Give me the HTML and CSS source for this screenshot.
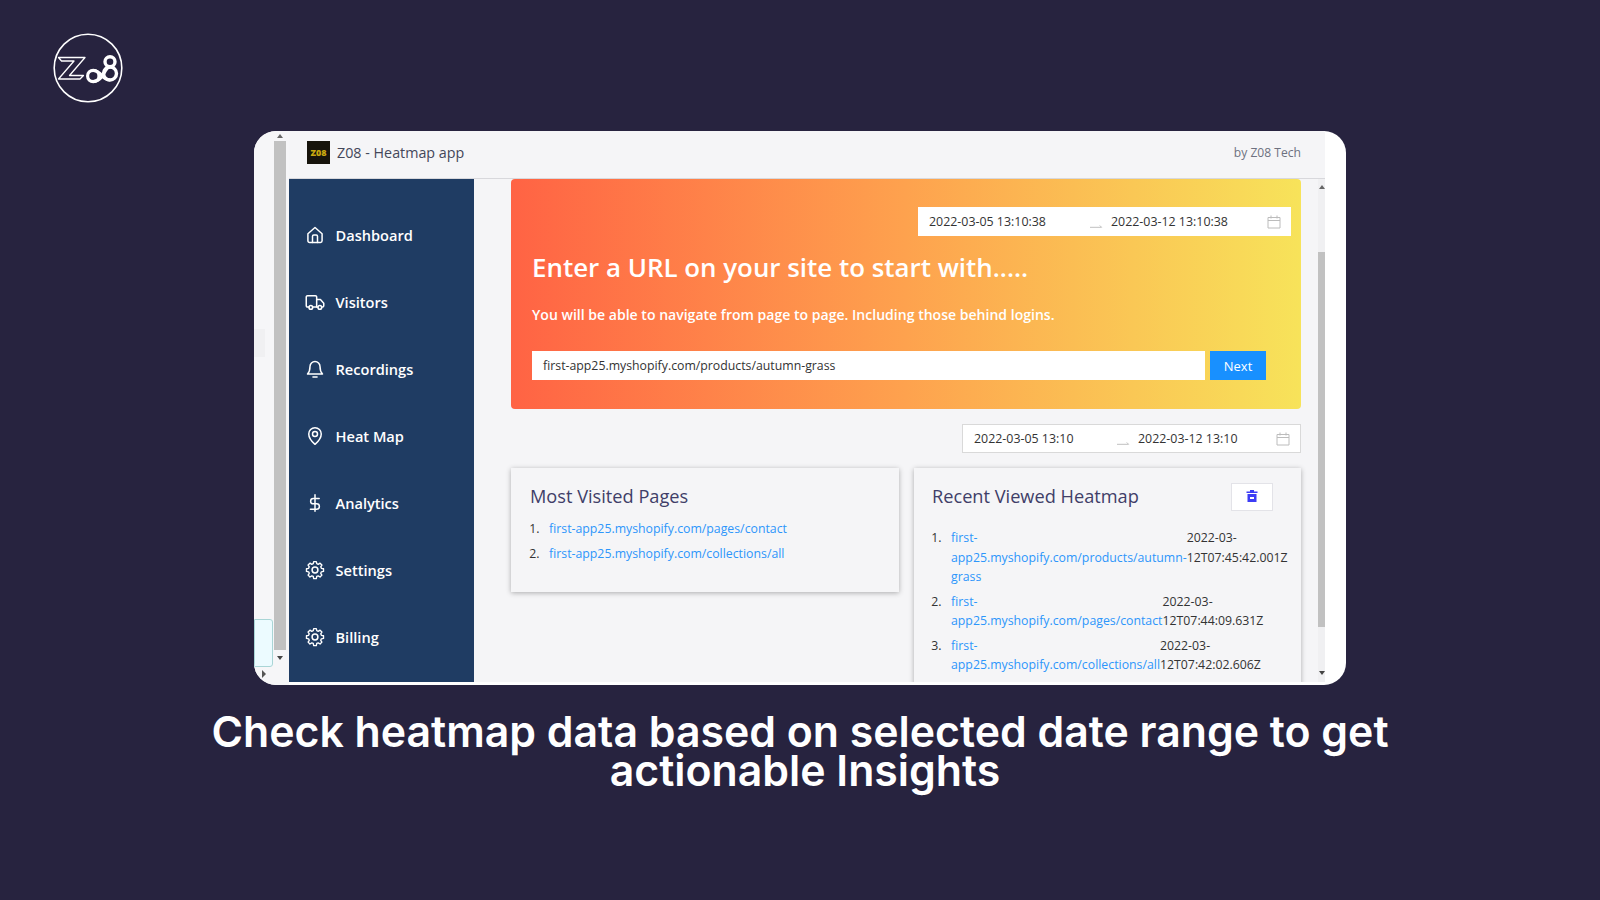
FILE: index.html
```html
<!DOCTYPE html>
<html lang="en">
<head>
    <meta charset="UTF-8">
    <meta name="viewport" content="width=device-width, initial-scale=1.0">
    <title>Z08 - Heatmap app</title>
    <link rel="stylesheet" href="styles.css">
</head>
<body>
    <header class="brand">
        <svg class="brand-logo" viewBox="0 0 70 70" width="70" height="70" fill="none" stroke="#fff">
            <circle cx="35" cy="35" r="33.8" stroke-width="1.6"/>
            <path d="M5.5 24.5H32L16.5 42.5H30.5L27 46H5.5L21 28H8.5Z" stroke-width="1.3" stroke-linejoin="round"/>
            <circle cx="40.3" cy="43" r="5.7" stroke-width="3.2"/>
            <circle cx="57" cy="40.5" r="6.5" stroke-width="3.4"/>
            <circle cx="57" cy="28.7" r="5" stroke-width="3.4"/>
            <path d="M40 37.500C45 37.500 47 40 49 42.500C51 45 53 47 57 47M40 48.500C45 48.500 47 46 49 43.500C51 41 53 34 57 34" stroke-width="3.2"/>
        </svg>
    </header>

    <section class="window">
        <div class="rail">
            <div class="rail-strip">
                <span class="rail-tab"></span>
                <span class="rail-box"></span>
                <span class="rail-corner"></span>
            </div>
            <div class="rail-scroll">
                <span class="arrow-up"></span>
                <span class="rail-thumb"></span>
                <span class="arrow-down"></span>
            </div>
        </div>

        <div class="app">
            <div class="topbar">
                <div class="topbar-title">
                    <span class="app-logo">Z08</span>
                    <span>Z08 - Heatmap app</span>
                </div>
                <span class="topbar-by">by Z08 Tech</span>
            </div>

            <div class="app-body">
                <nav class="sidebar">
                    <a class="nav-item">
                        <svg class="nav-icon" viewBox="0 0 24 24"><path d="M3.5 10.5 12 3l8.500 7.500V19a2 2 0 0 1-2 2h-13a2 2 0 0 1-2-2Z"/><path d="M9 21v-7.500a1.500 1.500 0 0 1 1.500-1.500h3a1.500 1.500 0 0 1 1.500 1.500V21"/></svg>
                        Dashboard
                    </a>
                    <a class="nav-item">
                        <svg class="nav-icon" viewBox="0 0 24 24"><path d="M5 18H3a1.500 1.500 0 0 1-1.500-1.500V6A1.500 1.500 0 0 1 3 4.500h9.500A1.500 1.500 0 0 1 14 6v12H9"/><path d="M14 9h4.500l4 4.500V16.500A1.500 1.500 0 0 1 21 18h-1M14 18h1.500"/><circle cx="7" cy="18.500" r="2.200"/><circle cx="17.800" cy="18.500" r="2.200"/></svg>
                        Visitors
                    </a>
                    <a class="nav-item">
                        <svg class="nav-icon" viewBox="0 0 24 24"><path d="M12 3a6 6 0 0 0-6 6c0 5-1 7-3 9h18c-2-2-3-4-3-9a6 6 0 0 0-6-6Z"/><path d="M9.500 21.500h5"/></svg>
                        Recordings
                    </a>
                    <a class="nav-item">
                        <svg class="nav-icon" viewBox="0 0 24 24"><path d="M12 22s-7.500-6.500-7.500-12.500a7.500 7.500 0 0 1 15 0C19.500 15.500 12 22 12 22Z"/><circle cx="12" cy="9.500" r="3"/></svg>
                        Heat Map
                    </a>
                    <a class="nav-item">
                        <svg class="nav-icon" viewBox="0 0 24 24"><path d="M12 2v20M17 6.500H10a3 3 0 0 0 0 6.500h4a3 3 0 0 1 0 6.500H6.500"/></svg>
                        Analytics
                    </a>
                    <a class="nav-item">
                        <svg class="nav-icon" viewBox="0 0 24 24"><use href="#gear"/></svg>
                        Settings
                    </a>
                    <a class="nav-item">
                        <svg class="nav-icon" viewBox="0 0 24 24"><use href="#gear"/></svg>
                        Billing
                    </a>
                </nav>

                <main class="main">
                    <div class="hero">
                        <div class="range range-hero">
                            <span class="range-text">2022-03-05 13:10:38</span>
                            <svg class="range-arrow" viewBox="0 0 14 6"><path d="M0 5.500h12.500L10.500 3.500"/></svg>
                            <span class="range-text">2022-03-12 13:10:38</span>
                            <svg class="range-cal" viewBox="0 0 14 14"><path d="M1 2.500h12v10.500H1ZM1 5.500h12M4 .5v3M10 .5v3"/></svg>
                        </div>
                        <h1 class="hero-title">Enter a URL on your site to start with.....</h1>
                        <p class="hero-sub">You will be able to navigate from page to page. Including those behind logins.</p>
                        <div class="hero-form">
                            <div class="url-input">first-app25.myshopify.com/products/autumn-grass</div>
                            <button class="btn-next">Next</button>
                        </div>
                    </div>

                    <div class="range range-main">
                        <span class="range-text">2022-03-05 13:10</span>
                        <svg class="range-arrow" viewBox="0 0 14 6"><path d="M0 5.500h12.500L10.500 3.500"/></svg>
                        <span class="range-text">2022-03-12 13:10</span>
                        <svg class="range-cal" viewBox="0 0 14 14"><path d="M1 2.500h12v10.500H1ZM1 5.500h12M4 .5v3M10 .5v3"/></svg>
                    </div>

                    <div class="cards">
                        <div class="card card-short">
                            <h2 class="card-title">Most Visited Pages</h2>
                            <ol class="page-list">
                                <li><a>first-app25.myshopify.com/pages/contact</a></li>
                                <li><a>first-app25.myshopify.com/collections/all</a></li>
                            </ol>
                        </div>
                        <div class="card card-tall">
                            <div class="card-head">
                                <h2 class="card-title">Recent Viewed Heatmap</h2>
                                <button class="btn-trash">
                                    <svg viewBox="0 0 14 14" width="14" height="14"><path d="M5 1h4v1.500h3.500V4h-11V2.500H5ZM2.500 5h9v8h-9Z" fill="#3d3df5"/><path d="M5 8h4v2H5Z" fill="#fff"/></svg>
                                </button>
                            </div>
                            <ol class="recent-list">
                                <li><span class="recent-row"><a>first-<br>app25.myshopify.com/products/autumn-<br>grass</a><span>2022-03-<br>12T07:45:42.001Z</span></span></li>
                                <li><span class="recent-row"><a>first-<br>app25.myshopify.com/pages/contact</a><span>2022-03-<br>12T07:44:09.631Z</span></span></li>
                                <li><span class="recent-row"><a>first-<br>app25.myshopify.com/collections/all</a><span>2022-03-<br>12T07:42:02.606Z</span></span></li>
                            </ol>
                        </div>
                    </div>
                </main>

                <div class="main-scroll">
                    <span class="arrow-up"></span>
                    <span class="main-thumb"></span>
                    <span class="arrow-down"></span>
                </div>
            </div>
        </div>
        <div class="gutter"></div>
    </section>

    <h2 class="caption">Check heatmap data based on selected date range to get <span class="caption-end">actionable Insights</span></h2>

    <svg class="defs" width="0" height="0">
        <symbol id="gear" viewBox="0 0 24 24">
            <path d="M10.300 2.500h3.400l.6 2.800 1.900.8 2.400-1.500 2.400 2.400-1.500 2.400.8 1.900 2.800.6v3.400l-2.800.6-.8 1.900 1.500 2.400-2.400 2.400-2.400-1.500-1.900.8-.6 2.800h-3.400l-.6-2.800-1.900-.8-2.400 1.500-2.400-2.400 1.500-2.400-.8-1.900-2.800-.6v-3.400l2.800-.6.8-1.900-1.500-2.400 2.400-2.400 2.400 1.500 1.900-.8Z" transform="translate(12 12) scale(.92) translate(-12 -13.500)"/>
            <circle cx="12" cy="12" r="3.500"/>
        </symbol>
    </svg>
</body>
</html>
```

FILE: styles.css
```css
* {
    box-sizing: border-box;
}
body {
    margin: 0;
    height: 900px;
    overflow: hidden;
    background-color: #27233f;
    font-family: "Open Sans", "Noto Sans", sans-serif;
    color: #333;
}
h1, h2, p, ol {
    margin: 0;
    padding: 0;
}

/* page frame */
.brand {
    height: 131px;
    padding: 33px 0 0 53px;
}
.brand-logo {
    display: block;
}
.window {
    display: flex;
    width: 1092px;
    height: 554px;
    margin-left: 254px;
    background: #fff;
    border-radius: 22px;
    overflow: hidden;
}
.caption {
    width: 1300px;
    margin: 27px auto 0;
    color: #fff;
    font-family: Inter, "Open Sans", sans-serif;
    font-size: 42.800px;
    font-weight: 600;
    line-height: 39px;
    text-align: center;
}
.caption-end {
    display: block;
    padding-left: 10px;
}
.defs {
    position: absolute;
}

/* left strip with the browser scrollbar */
.rail {
    display: flex;
    flex: 0 0 35px;
    height: 100%;
    background: #f6f6f8;
}
.rail-strip {
    position: relative;
    width: 20px;
}
.rail-tab {
    position: absolute;
    left: 0;
    top: 198px;
    width: 11px;
    height: 28px;
    background: #f0f0f2;
}
.rail-box {
    position: absolute;
    left: 0;
    top: 488px;
    width: 19px;
    height: 48px;
    background: #ecfbff;
    border: 1px solid #a9d5d6;
    border-radius: 0 3px 3px 0;
}
.rail-corner {
    position: absolute;
    left: 8px;
    bottom: 7px;
    width: 0;
    height: 0;
    border-left: 4px solid #555;
    border-top: 4px solid transparent;
    border-bottom: 4px solid transparent;
}
.rail-scroll {
    display: flex;
    flex-direction: column;
    align-items: center;
    width: 12px;
    padding: 3px 0 25px;
}
.rail-thumb {
    flex: 1;
    width: 12px;
    margin: 3px 0 6px;
    background: #c1c1c1;
}
.arrow-up, .arrow-down {
    flex: none;
    width: 0;
    height: 0;
    border-left: 3.500px solid transparent;
    border-right: 3.500px solid transparent;
}
.arrow-up {
    border-bottom: 4px solid #666;
}
.arrow-down {
    border-top: 4px solid #444;
}

/* app */
.app {
    display: flex;
    flex-direction: column;
    flex: 0 0 1036px;
    min-width: 0;
    height: 551px;
    background: #f5f5f7;
}
.gutter {
    flex: 1;
}
.topbar {
    display: flex;
    align-items: center;
    justify-content: space-between;
    flex: 0 0 48px;
    padding: 0 24px 5px 18px;
    border-bottom: 1px solid #d8d8dc;
    font-size: 14.300px;
    color: #44475a;
}
.topbar-title {
    display: flex;
    align-items: center;
    gap: 7px;
}
.app-logo {
    width: 23px;
    height: 23px;
    background: #17140c;
    color: #c9a80f;
    font-size: 9px;
    font-weight: 800;
    line-height: 23px;
    text-align: center;
    overflow: hidden;
}
.topbar-by {
    font-size: 12.100px;
    color: #6d7180;
}
.app-body {
    display: flex;
    flex: 1;
    min-height: 0;
}
.sidebar {
    display: flex;
    flex-direction: column;
    flex: 0 0 185px;
    padding-top: 22px;
    background: #1f3c63;
}
.nav-item {
    display: flex;
    align-items: center;
    gap: 10.500px;
    height: 67px;
    padding-left: 16px;
    color: #fff;
    font-size: 14.600px;
    font-weight: 600;
    white-space: nowrap;
}
.nav-icon {
    width: 20px;
    height: 20px;
    fill: none;
    stroke: #fff;
    stroke-width: 1.800;
    stroke-linejoin: round;
    stroke-linecap: round;
}
.main {
    flex: 1;
    min-width: 0;
    padding: 0 17px 0 37px;
    overflow: hidden;
}
.main-scroll {
    display: flex;
    flex-direction: column;
    align-items: center;
    flex: 0 0 7px;
    padding: 6px 0 7px;
    background: #f0f0f2;
}
.main-thumb {
    width: 7px;
    height: 375px;
    margin: 63px 0 auto;
    background: #c1c1c1;
}

/* hero */
.hero {
    height: 230px;
    padding: 28px 10px 0 21px;
    background: linear-gradient(90deg, #ff6344 0%, #fea24e 50%, #f7e35a 100%);
    border-radius: 4px;
}
.range {
    display: flex;
    align-items: center;
    height: 29px;
    padding: 0 10px 0 11px;
    background: #fff;
    font-size: 12.400px;
    color: #333;
}
.range-hero {
    width: 373px;
    margin-left: auto;
}
.range-main {
    width: 339px;
    margin: 15px 0 0 auto;
    border: 1px solid #d9d9d9;
}
.range-text {
    flex: 1;
}
.range-hero .range-text:first-child {
    flex: 0 0 161px;
}
.range-main .range-text:first-child {
    flex: 0 0 143px;
}
.range-arrow {
    flex: none;
    width: 13px;
    height: 6px;
    margin: 6px 8px 0 0;
    fill: none;
    stroke: #bbb;
}
.range-cal {
    flex: none;
    width: 14px;
    height: 14px;
    fill: none;
    stroke: #bcbcbc;
}
.hero-title {
    margin-top: 13px;
    color: #fff;
    font-size: 25.900px;
    font-weight: 600;
    line-height: 36px;
}
.hero-sub {
    margin-top: 20px;
    color: #fff;
    font-size: 14.050px;
    font-weight: 600;
    line-height: 19px;
}
.hero-form {
    display: flex;
    gap: 5px;
    margin-top: 27px;
}
.url-input {
    width: 673px;
    height: 29px;
    padding-left: 11px;
    background: #fff;
    font-size: 12.300px;
    line-height: 30px;
}
.btn-next {
    width: 56px;
    height: 29px;
    border: 0;
    background: #1890ff;
    color: #fff;
    font-family: inherit;
    font-size: 13px;
}

/* cards */
.cards {
    display: flex;
    align-items: flex-start;
    gap: 15px;
    margin-top: 15px;
}
.card {
    flex: 0 0 388px;
    min-width: 0;
    padding: 0 18px;
    background: #f5f5f7;
    box-shadow: 0 1px 5px rgba(0, 0, 0, 0.3);
}
.card-short {
    height: 124px;
    padding: 16px 0 0 19px;
}
.card-tall {
    flex-basis: 387px;
    height: 240px;
    padding-top: 15px;
}
.card-head {
    display: flex;
    align-items: flex-start;
    justify-content: space-between;
    padding-right: 10px;
}
.card-title {
    color: #403e68;
    font-size: 18.200px;
    font-weight: 500;
    line-height: 25px;
}
.card-tall .card-title {
    margin-top: 1px;
}
.btn-trash {
    display: flex;
    align-items: center;
    justify-content: center;
    width: 42px;
    height: 28px;
    padding: 0 0 2px;
    border: 1px solid #e3e3e8;
    background: #fff;
}
.page-list, .recent-list {
    padding-left: 19px;
    font-size: 12.300px;
    line-height: 19.500px;
}
.page-list {
    margin-top: 10px;
}
.page-list li, .recent-list li {
    margin-bottom: 5px;
}
.page-list li::marker, .recent-list li::marker {
    content: counter(list-item) ".   ";
}
.recent-list {
    margin-top: 17px;
}
.recent-row {
    display: inline-flex;
    vertical-align: top;
    white-space: nowrap;
}
a {
    color: #2d96fb;
}
```
